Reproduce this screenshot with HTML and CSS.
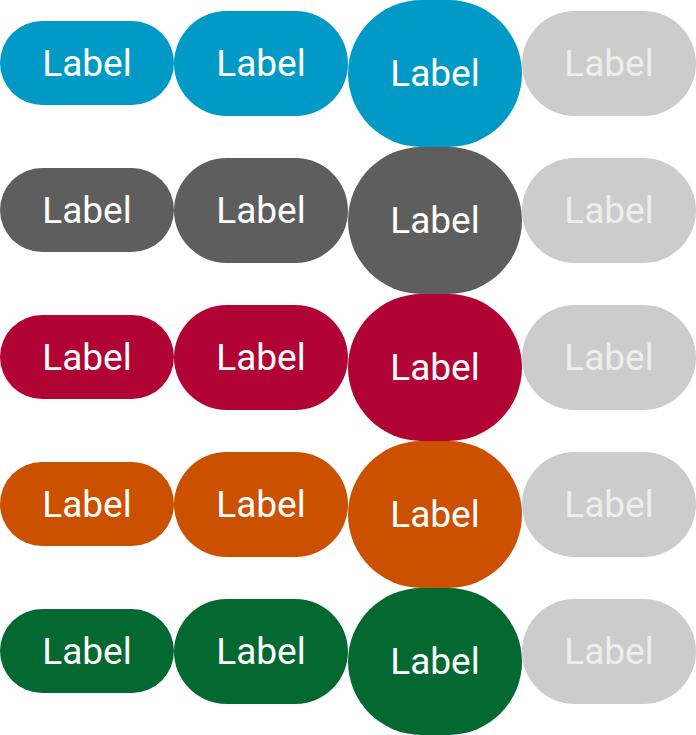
FILE: index.html
```html
<!DOCTYPE html>
<html>
<head>
<meta charset="utf-8">
<link rel="stylesheet" href="styles.css">
</head>
<body>
<div class="grid">
  <div class="row blue">
    <div class="btn sm">Label</div>
    <div class="btn md">Label</div>
    <div class="btn lg">Label</div>
    <div class="btn md off">Label</div>
  </div>
  <div class="row gray">
    <div class="btn sm">Label</div>
    <div class="btn md">Label</div>
    <div class="btn lg">Label</div>
    <div class="btn md off">Label</div>
  </div>
  <div class="row red">
    <div class="btn sm">Label</div>
    <div class="btn md">Label</div>
    <div class="btn lg">Label</div>
    <div class="btn md off">Label</div>
  </div>
  <div class="row orange">
    <div class="btn sm">Label</div>
    <div class="btn md">Label</div>
    <div class="btn lg">Label</div>
    <div class="btn md off">Label</div>
  </div>
  <div class="row green">
    <div class="btn sm">Label</div>
    <div class="btn md">Label</div>
    <div class="btn lg">Label</div>
    <div class="btn md off">Label</div>
  </div>
</div>
</body>
</html>
```
FILE: styles.css
```css
html, body {
  margin: 0;
  padding: 0;
  background: #ffffff;
}
.grid {
  display: flex;
  flex-direction: column;
  width: 696px;
}
.row {
  display: flex;
  align-items: flex-start;
  height: 147px;
}
.btn {
  width: 174px;
  display: flex;
  align-items: center;
  justify-content: center;
  font-family: Roboto, "Liberation Sans", sans-serif;
  font-size: 37px;
  color: #ffffff;
  box-sizing: border-box;
  border-radius: 9999px;
}
.sm {
  height: 84px;
  margin-top: 21px;
}
.md {
  height: 105px;
  margin-top: 11px;
}
.lg {
  height: 147px;
}
.blue .btn { background: #019ac6; }
.gray .btn { background: #5e5e5e; }
.red .btn { background: #b10334; }
.orange .btn { background: #cb5000; }
.green .btn { background: #046931; }
.row .off {
  background: #cccccc;
  color: #eeeeee;
}
```
